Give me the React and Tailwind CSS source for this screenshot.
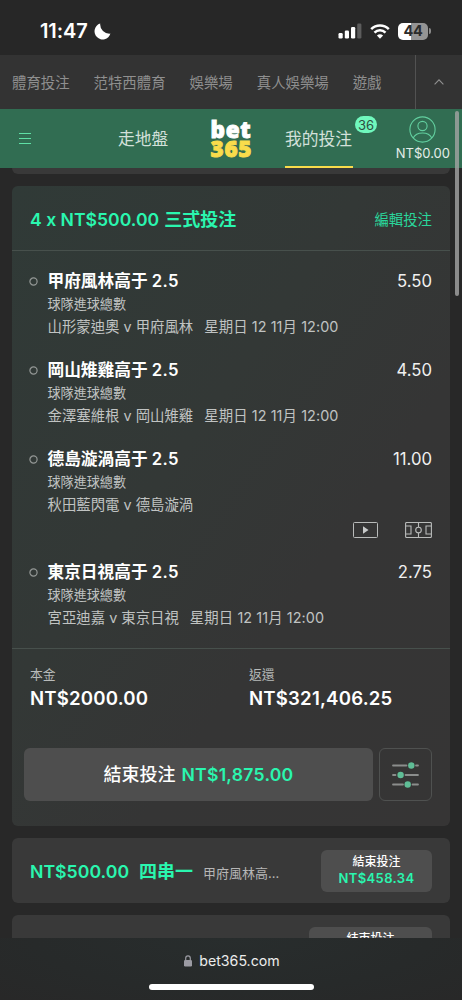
import { Fragment } from 'react';
import clsx from 'clsx';

const NAV_ITEMS = ['體育投注', '范特西體育', '娛樂場', '真人娛樂場', '遊戲'];

const SELECTIONS = [
  { team: '甲府風林高于', line: '2.5', home: '山形蒙迪奧', away: '甲府風林', time: true, odds: '5.50' },
  { team: '岡山雉雞高于', line: '2.5', home: '金澤塞維根', away: '岡山雉雞', time: true, odds: '4.50' },
  { team: '德島漩渦高于', line: '2.5', home: '秋田藍閃電', away: '德島漩渦', live: true, odds: '11.00' },
  { team: '東京日視高于', line: '2.5', home: '宮亞迪嘉', away: '東京日視', time: true, odds: '2.75' },
];

function StatusBar() {
  return (
    <div className="flex h-[55px] shrink-0 items-center justify-between bg-[#272727] pl-10 pr-[31px] pt-[7px]">
      <div className="flex items-center gap-[6px]">
        <span className="text-[20px] font-semibold leading-6 tracking-[-0.1px] text-white">11:47</span>
        <svg width="17" height="17" viewBox="0 0 17 17">
          <path d="M6.200 .6A8.100 8.100 0 1 0 16.400 10.600 9.300 9.300 0 0 1 6.200 .6Z" fill="#fff" />
        </svg>
      </div>
      <div className="flex items-center">
        <svg width="24" height="16" viewBox="0 0 24 16">
          <rect x="0.5" y="10" width="4.2" height="5.5" rx="1.2" fill="#fff" />
          <rect x="6.8" y="7.5" width="4.2" height="8" rx="1.2" fill="#fff" />
          <rect x="13" y="4" width="4.2" height="11.5" rx="1.2" fill="#fff" />
          <rect x="19.2" y="0.5" width="4.2" height="15" rx="1.2" fill="#5c5c5c" />
        </svg>
        <svg width="20" height="15" viewBox="0 0 20 15" className="ml-2">
          <path d="M1.2 5.1a12.6 12.6 0 0 1 17.6 0" fill="none" stroke="#fff" strokeWidth="2.6" />
          <path d="M4.5 8.6a7.8 7.8 0 0 1 11 0" fill="none" stroke="#fff" strokeWidth="2.5" />
          <path d="M10 14.8 6.9 11.6a4.5 4.5 0 0 1 6.2 0Z" fill="#fff" />
        </svg>
        <div className="ml-2 flex h-[17px] w-[30px] items-center justify-center rounded-[5px] bg-[linear-gradient(90deg,#fff_44%,#949494_44%)]">
          <span className="text-[14.5px] font-bold leading-4 tracking-[-0.3px] text-[#2b2b2b]">44</span>
        </div>
        <span className="ml-px h-[6px] w-[2px] rounded-r-full bg-[#8a8a8a]" />
      </div>
    </div>
  );
}

function ProductNav() {
  return (
    <nav className="flex h-[54px] shrink-0 bg-[#333] text-[14.4px] text-[#8f8f8f]">
      <div className="flex flex-1 items-center gap-[24px] whitespace-nowrap pl-3 pt-0.5">
        {NAV_ITEMS.map((item) => (
          <span key={item} className="leading-5">{item}</span>
        ))}
      </div>
      <div className="flex w-[47px] items-center justify-center border-l border-[#525252]">
        <svg width="10" height="6" viewBox="0 0 10 6">
          <path d="M.6 5.4 5 .9l4.4 4.5" fill="none" stroke="#919191" strokeWidth="1.1" />
        </svg>
      </div>
    </nav>
  );
}

function Header() {
  return (
    <header className="flex h-[59px] shrink-0 bg-[#316d52] text-[16.8px] text-[#d3e0da]">
      <div className="flex w-[118px] items-center pl-[19px]">
        <svg width="12" height="13" viewBox="0 0 12 13" stroke="#5fe0a5" strokeWidth="1.2">
          <path d="M0 1.5h12M0 6.5h12M0 11.5h12" />
        </svg>
      </div>
      <div className="flex w-[92px] items-center leading-6">走地盤</div>
      <div className="flex w-[75px] flex-col justify-center pl-[0.5px] pt-px font-['Noto_Sans'] text-[22.5px] font-black leading-[19px]">
        <span className="tracking-[0.7px] text-white [-webkit-text-stroke:0.9px_#fff]">bet</span>
        <span className="tracking-[0.7px] text-[#f9dc4b] [-webkit-text-stroke:0.9px_#f9dc4b]">365</span>
      </div>
      <div className="relative flex w-[68px] items-center border-b-2 border-[#f9dc4b] pt-0.5 leading-6">
        我的投注
        <span className="absolute left-[70px] top-[7px] flex h-[17px] w-[22px] items-center justify-center rounded-full bg-[#70f8bd] text-[13px] leading-4 text-[#2f4f42]">
          36
        </span>
      </div>
      <div className="flex flex-1 flex-col items-end pr-3 pt-[7px]">
        <svg width="27" height="27" viewBox="0 0 27 27" fill="none" stroke="#62cf9f" strokeWidth="1.1" className="mr-[14px]">
          <circle cx="13.5" cy="13.5" r="12.6" />
          <circle cx="13.5" cy="10" r="4.6" />
          <path d="M4.2 22c1.6-3.4 5.2-5 9.3-5s7.7 1.6 9.3 5" />
        </svg>
        <span className="mt-px text-[13px] leading-[18px] text-[#e4ede9]">NT$0.00</span>
      </div>
    </header>
  );
}

function Selection({ team, line, home, away, time, live, odds }) {
  return (
    <li className="flex">
      <svg width="9" height="9" viewBox="0 0 9 9" className="ml-[17px] mt-[8px] shrink-0">
        <circle cx="4.5" cy="4.5" r="3.6" fill="none" stroke="#949896" strokeWidth="1.2" />
      </svg>
      <div className="ml-[9.5px] flex-1 whitespace-nowrap pr-[18px] text-[#c0c3c2]">
        <div className="flex h-6 items-center justify-between text-[16.7px] leading-6 text-white">
          <span className="font-semibold">
            {team} <span className="tracking-[0.3px]">{line}</span>
          </span>
          <span className="text-[#f0f0f0]">{odds}</span>
        </div>
        <div className="h-[22px] text-[13.1px] leading-[22px]">球隊進球總數</div>
        <div className="flex h-6 gap-[11px] text-[14.4px] leading-6">
          <span>{home} v {away}</span>
          {time && <span className="tracking-[0.08px]">星期日 12 11月 12:00</span>}
        </div>
        {live && (
          <div className="flex h-6 items-center justify-end gap-[27px] pt-0.5">
            <svg width="25" height="16" viewBox="0 0 25 16" fill="none" stroke="#b9bbba" strokeWidth="1">
              <rect x="0.5" y="0.5" width="24" height="15" rx="1" />
              <path d="M10 4.3v7.4l5.5-3.7Z" fill="#c8caca" stroke="none" />
            </svg>
            <svg width="27" height="16" viewBox="0 0 27 16" fill="none" stroke="#b9bbba" strokeWidth="1.1">
              <rect x="0.6" y="0.5" width="25.8" height="15" rx="1" />
              <path d="M.5 4H6v8H.5M26.5 4H21v8h5.5M13.5.5V5M13.5 11v4.5" />
              <circle cx="13.5" cy="8" r="2.8" />
            </svg>
          </div>
        )}
      </div>
    </li>
  );
}

function Total({ label, value }) {
  return (
    <div className="w-[219px] shrink-0">
      <div className="text-[12.8px] leading-5 text-[#b8bbba]">{label}</div>
      <div className="mt-px text-[18.6px] font-semibold leading-6 tracking-[0.2px] text-white">{value}</div>
    </div>
  );
}

function BetCard() {
  return (
    <section className="mt-3 h-[640px] shrink-0 rounded-md bg-[linear-gradient(125deg,#303a37_0%,#333836_40%,#353535_65%,#363535_100%)]">
      <div className="flex h-[65px] items-center justify-between border-b border-[#47504c] px-[18px] pt-[3px]">
        <h2 className="flex gap-[5px] text-[18px] font-semibold leading-6 text-[#2af6af]">
          <span className="text-[17.6px]">4 x NT$500.00</span>
          <span>三式投注</span>
        </h2>
        <span className="text-[14.4px] leading-5 text-[#2ad69b]">編輯投注</span>
      </div>
      <ul className="flex flex-col gap-[19px] py-[18px]">
        {SELECTIONS.map((s) => (
          <Selection key={s.team} {...s} />
        ))}
      </ul>
      <div className="flex h-[100px] border-t border-[#47504c] pl-[18px] pt-[16px]">
        <Total label="本金" value="NT$2000.00" />
        <Total label="返還" value="NT$321,406.25" />
      </div>
      <div className="flex gap-[6px] pl-3">
        <button className="flex h-[53px] w-[349px] items-center justify-center gap-[6px] rounded-md bg-[#4e4e4e] text-[18px] leading-6">
          <span className="font-medium text-white">結束投注</span>
          <span className="text-[17.6px] font-semibold tracking-[0.25px] text-[#2af6af]">NT$1,875.00</span>
        </button>
        <button className="flex h-[53px] w-[53px] items-center justify-center rounded-md border border-[#4f5150]">
          <svg width="27" height="26" viewBox="0 0 27 26">
            <path
              d="M1 3.5h13.5M24 3.5h2M1 13h2.5M13.5 13H26M1 22.5h10M20.5 22.5H26"
              stroke="#8b8d8c"
              strokeWidth="1.8"
              strokeLinecap="round"
            />
            <circle cx="19.3" cy="3.5" r="3.2" fill="#5fbd96" />
            <circle cx="8.6" cy="13" r="3.2" fill="#5fbd96" />
            <circle cx="15.7" cy="22.5" r="3.2" fill="#5fbd96" />
          </svg>
        </button>
      </div>
    </section>
  );
}

function CompactBet({ stake, type, summary, cashOut, wide }) {
  return (
    <section className="mt-3 flex h-[65px] shrink-0 items-center justify-between whitespace-nowrap rounded-md bg-[#393939] px-[18px]">
      <div className="flex items-baseline pt-1 leading-6">
        {stake && (
          <Fragment>
            <span className="text-[17.7px] font-semibold text-[#2af6af]">{stake}</span>
            <span className="ml-[10px] text-[18px] font-semibold text-[#2af6af]">{type}</span>
            <span className="ml-[10px] text-[13px] text-[#b6b6b6]">{summary}</span>
          </Fragment>
        )}
      </div>
      <button
        className={clsx(
          'flex h-[42px] flex-col items-center rounded-md bg-[#4e4e4e] pt-[3px] text-[12px] leading-[17px]',
          wide ? 'w-[123px]' : 'w-[111px]'
        )}
      >
        <span className="font-medium text-white">結束投注</span>
        <span className="text-[13px] font-semibold tracking-[0.4px] text-[#2af6af]">{cashOut}</span>
      </button>
    </section>
  );
}

function BrowserBar() {
  return (
    <footer className="flex h-[62px] shrink-0 flex-col items-center bg-[radial-gradient(ellipse_at_50%_0%,#282d2d_0%,#272a2a_60%,#282828_100%)] pt-[13px]">
      <div className="flex items-center gap-[7px] pl-0.5">
        <svg width="8" height="12" viewBox="0 0 8 12">
          <path d="M1.7 5.5V3.2a2.3 2.3 0 0 1 4.6 0v2.3" fill="none" stroke="#9b9ba3" strokeWidth="1.2" />
          <rect y="5" width="8" height="6.5" rx="1.2" fill="#9b9ba3" />
        </svg>
        <span className="text-[14.2px] leading-5 text-[#ececec]">bet365.com</span>
      </div>
      <span className="mt-[13px] h-[6px] w-[165px] shrink-0 rounded-full bg-white" />
    </footer>
  );
}

export default function App() {
  return (
    <div className="relative flex h-[1000px] w-[462px] flex-col overflow-hidden bg-[#282828] font-['Inter','Noto_Sans_CJK_TC',sans-serif]">
      <StatusBar />
      <ProductNav />
      <Header />
      <main className="flex min-h-0 flex-1 flex-col overflow-hidden px-3">
        <div className="h-[6px] shrink-0 rounded-b-md bg-[#393939]" />
        <BetCard />
        <CompactBet stake="NT$500.00" type="四串一" summary="甲府風林高..." cashOut="NT$458.34" />
        <CompactBet wide />
      </main>
      <BrowserBar />
      <div className="absolute right-[3px] top-[111px] h-[185px] w-[4px] rounded-full bg-[#a4a4a4]/80" />
    </div>
  );
}
